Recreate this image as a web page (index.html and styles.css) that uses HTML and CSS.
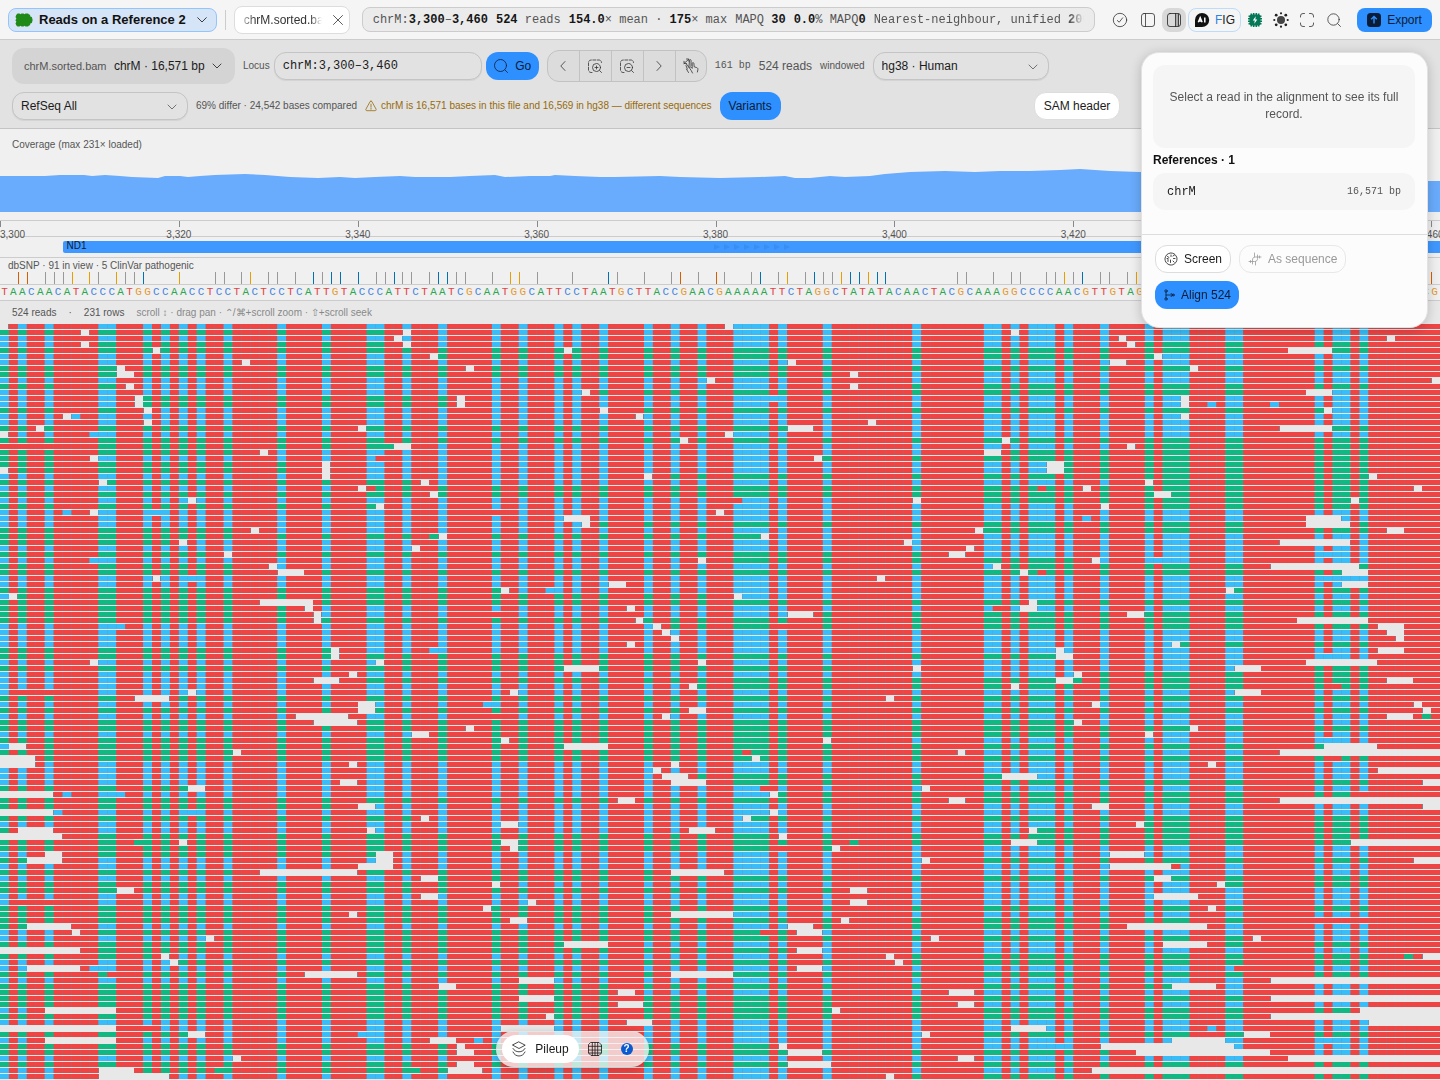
FILE: index.html
```html
<!DOCTYPE html>
<html lang="en">
<head>
<meta charset="utf-8">
<meta name="viewport" content="width=device-width, initial-scale=1">
<title>Reads on a Reference 2</title>
<link rel="stylesheet" href="styles.css">
</head>
<body>
<header class="topbar">
  <button class="title-btn">
    <svg class="logo" width="18" height="14" viewBox="0 0 18 14"><path fill="#1f8a17" d="M2.500 .5h2l1 .7 1-.7h2l1 .7 1-.7h2.500l1 .9 1 .4.3 1.700 1.500.6.7 2.200v1.400l-.7 2.200-1.500.6-.3 1.700-1 .4-1 .9h-2.500l-1-.7-1 .7h-2l-1-.7-1 .7h-2l-1.300-1.200-.7-2 .9-1.600-.9-1.200v-.6l.9-1.200-.9-1.600.7-2z"/></svg>
    <span class="title-text">Reads on a Reference 2</span>
    <svg class="title-chev" width="10" height="6" viewBox="0 0 10 6"><path class="ln" d="M.7.700 5 5l4.300-4.300"/></svg>
  </button>
  <span class="divider"></span>
  <div class="file-tab"><span class="tab-name">chrM.sorted.bam</span>
    <button class="bare" aria-label="Close tab"><svg width="12" height="12" viewBox="0 0 12 12"><path class="ln" d="M1.500 1.500l9 9M10.500 1.500l-9 9"/></svg></button></div>
  <div class="status"><span>chrM:<b>3,300</b>–<b>3,460</b></span><span><b>524</b> reads</span><span><b>154.0</b>× mean · <b>175</b>× max</span><span>MAPQ <b>30</b></span><span><b>0.0</b>% MAPQ<b>0</b></span><span>Nearest-neighbour, unified <b>200</b>/200</span></div>
  <nav class="tools">
    <button class="icon-btn wide" aria-label="Checks"><svg width="16" height="16" viewBox="0 0 16 16"><circle class="ln" cx="8" cy="8" r="6.700"/><path class="ln" d="M5.300 8.500l1.900 1.700 3.500-4.400"/></svg></button>
    <button class="icon-btn wide" aria-label="Left sidebar"><svg width="16" height="16" viewBox="0 0 16 16"><rect class="ln" x="1.500" y="1.500" width="13" height="13" rx="2.500"/><path class="ln" d="M5.500 1.500v13"/></svg></button>
    <button class="icon-btn on" aria-label="Right sidebar"><svg width="16" height="16" viewBox="0 0 16 16"><rect class="ln" x="1.500" y="1.500" width="13" height="13" rx="2.500"/><path fill="#aaa" d="M10 2h3v12h-3z"/><path class="ln" d="M9.500 1.500v13M12.500 2v12"/></svg></button>
    <button class="fig-btn"><svg width="16" height="16" viewBox="0 0 16 16"><path fill="#111" d="M8 1a7 6.800 0 1 1 0 14H1V8a7 7 0 0 1 7-7z"/><path d="M4.300 10.300L6.200 5.700l1.900 4.600M5 8.900h2.500M10.800 5.500v5" fill="none" stroke="#fff" stroke-width="1.500"/></svg><span><i>F</i>IG</span></button>
    <button class="icon-btn" aria-label="Processor"><svg width="16" height="16" viewBox="0 0 16 16"><g stroke="#047857" stroke-width="1.600"><path d="M4.300 1.500v13M6.700 1v14M9.300 1v14M11.700 1.500v13M1.500 4.300h13M1 6.700h14M1 9.300h14M1.500 11.700h13"/></g><rect x="2.500" y="2.500" width="11" height="11" rx="2" fill="#047857"/><path fill="#fff" d="M8.800 4.300L5.800 8.400h2l-.5 3.300 3-4.200H8.300z"/></svg></button>
    <button class="icon-btn" aria-label="Theme"><svg width="16" height="16" viewBox="0 0 16 16"><circle cx="8" cy="8" r="4" fill="#444"/><g fill="#222"><circle cx="8" cy="1.300" r="1.100"/><circle cx="8" cy="14.700" r="1.100"/><circle cx="1.300" cy="8" r="1.100"/><circle cx="14.700" cy="8" r="1.100"/><circle cx="3.200" cy="3.200" r="1.400"/><circle cx="12.800" cy="3.200" r="1.400"/><circle cx="3.200" cy="12.800" r="1.400"/><circle cx="12.800" cy="12.800" r="1.400"/></g></svg></button>
    <button class="icon-btn" aria-label="Full screen"><svg width="16" height="16" viewBox="0 0 16 16"><path class="ln" d="M1.500 5V4A2.500 2.500 0 0 1 4 1.500h1.500M10.500 1.500H12A2.500 2.500 0 0 1 14.500 4v1M14.500 11v1a2.500 2.500 0 0 1-2.500 2.500h-1.500M5.500 14.500H4A2.500 2.500 0 0 1 1.500 12v-1"/></svg></button>
    <button class="icon-btn wide" aria-label="Search"><svg width="16" height="16" viewBox="0 0 16 16"><circle class="ln" cx="7.500" cy="7.500" r="5.700"/><path class="ln" d="M11.700 11.700l2.800 2.800"/></svg></button>
  </nav>
  <button class="primary export"><svg width="14" height="14" viewBox="0 0 14 14"><rect width="14" height="14" rx="3.500" fill="#0b1c36"/><path d="M7 10.500v-7M4.200 6.200L7 3.400l2.800 2.800" fill="none" stroke="#2e90ff" stroke-width="1.400"/></svg>Export</button>
</header>

<section class="toolbar">
  <div class="tool-row">
    <button class="source"><span class="muted">chrM.sorted.bam</span><span>chrM · 16,571 bp</span><svg width="10" height="6" viewBox="0 0 10 6"><path class="ln" d="M1 1l4 4 4-4"/></svg></button>
    <form class="locus" onsubmit="return false">
      <label class="small" for="locus">Locus</label>
      <input id="locus" type="text" value="chrM:3,300–3,460">
      <button class="primary go"><svg width="16" height="16" viewBox="0 0 16 16"><circle class="ln" cx="7.500" cy="7.500" r="6"/><path class="ln" d="M12 12l2.500 2.500"/></svg>Go</button>
    </form>
    <div class="seg">
      <button aria-label="Previous"><svg width="16" height="16" viewBox="0 0 16 16"><path class="ln" d="M10 3.500L5.800 8l4.200 4.500"/></svg></button>
      <button aria-label="Zoom in"><svg width="16" height="16" viewBox="0 0 16 16"><path class="ln" stroke-dasharray="3 1.500" d="M5 14.500H4A2.500 2.500 0 0 1 1.500 12V4.500A2.500 2.500 0 0 1 4 2h8a2.500 2.500 0 0 1 2.500 2.500"/><circle class="ln" cx="9.500" cy="9.500" r="4"/><path class="ln" d="M12.500 12.500l2 2M9.500 8v3M8 9.500h3"/></svg></button>
      <button aria-label="Zoom out"><svg width="16" height="16" viewBox="0 0 16 16"><path class="ln" stroke-dasharray="3 1.500" d="M5 14.500H4A2.500 2.500 0 0 1 1.500 12V4.500A2.500 2.500 0 0 1 4 2h8a2.500 2.500 0 0 1 2.500 2.500"/><circle class="ln" cx="9.500" cy="9.500" r="4"/><path class="ln" d="M12.500 12.500l2 2M8 9.500h3"/></svg></button>
      <button aria-label="Next"><svg width="16" height="16" viewBox="0 0 16 16"><path class="ln" d="M6 3.500L10.200 8 6 12.500"/></svg></button>
      <button aria-label="Pan by hand"><svg width="16" height="16" viewBox="0 0 16 16"><path class="ln" d="M1 5.500L5.500 1.500M1 3.300v2.200h2.500M3.500 1h2.300v2.200M5.500 14.500l-2-3.300M4.300 11L3 7.500c-.3-1 .9-1.500 1.400-.6l1.400 2.600M6 8.500l.5-6c.1-1.200 1.600-1.100 1.600.1l-.1 5M9.500 15l-1.300-2.500-1.600-2.300c-.7-1 .5-1.900 1.300-1.100l1.300 1.300V5.500c0-1.200 1.600-1.200 1.700 0l.3 3.300 2.500.8c1 .4 1.300 1 1.200 2l-.5 2.400"/></svg></button>
    </div>
    <span class="mono small">161 bp</span>
    <span class="muted">524 reads</span>
    <span class="small">windowed</span>
    <span class="pick"><select aria-label="Genome"><option>hg38 · Human</option></select><svg width="10" height="6" viewBox="0 0 10 6"><path class="ln" d="M1 1l4 4 4-4"/></svg></span>
  </div>
  <div class="tool-row">
    <span class="pick"><select aria-label="Gene track"><option>RefSeq All</option></select><svg width="10" height="6" viewBox="0 0 10 6"><path class="ln" d="M1 1l4 4 4-4"/></svg></span>
    <span class="small">69% differ · 24,542 bases compared</span>
    <span class="small warn"><svg width="12" height="12" viewBox="0 0 12 12"><path class="ln" d="M6 1.200c.5 0 .8.200 1 .6l4 7.200c.4.800 0 1.700-1 1.700H2c-1 0-1.400-.9-1-1.700l4-7.200c.2-.4.500-.6 1-.6zM6 4.200v3M6 8.300v1"/></svg>chrM is 16,571 bases in this file and 16,569 in hg38 — different sequences</span>
    <button class="primary variants">Variants</button>
    <button class="plain sam">SAM header</button>
  </div>
</section>

<main class="viewer">
  <section class="coverage">
    <h2 class="small">Coverage (max 231× loaded)</h2>
    <svg id="cov" viewBox="0 0 1440 44" preserveAspectRatio="none"></svg>
  </section>
  <section class="ruler" id="ruler"></section>
  <section class="genes"><div class="gene"><span>ND1</span><svg width="78" height="6" viewBox="0 0 78 6"><path fill="#388ef2" d="M0 0l6 3-6 3zM10 0l6 3-6 3zM20 0l6 3-6 3zM30 0l6 3-6 3zM40 0l6 3-6 3zM50 0l6 3-6 3zM60 0l6 3-6 3zM70 0l6 3-6 3z"/></svg></div></section>
  <section class="snps" id="snps"><h2 class="small">dbSNP · 91 in view · 5 ClinVar pathogenic</h2></section>
  <section class="bases" id="bases"></section>
  <section class="summary small"><span>524 reads</span><span>·</span><span>231 rows</span><span class="hint">scroll ↕ · drag pan · ⌃/⌘+scroll zoom · ⇧+scroll seek</span></section>
  <canvas class="pileup" id="pileup" aria-label="Aligned reads"></canvas>

  <div class="dock-area">
    <nav class="dock">
      <button class="dock-on"><svg width="16" height="16" viewBox="0 0 16 16"><path class="ln" d="M8 1l6.200 3.200L8 7.500 1.800 4.200zM2 7.500c1 2 3.500 3.300 6 3.300s5-1.300 6-3.300M2 11c1 2.500 3.500 4 6 4s5-1.500 6-4"/></svg>Pileup</button>
      <button aria-label="Grid"><svg width="16" height="16" viewBox="0 0 16 16"><path class="ln" d="M4 1.500h8L14.500 4v8L12 14.500H4L1.500 12V4zM5.300 1.500v13M8 1.500v13M10.700 1.500v13M1.500 5.300h13M1.500 9h13M2 12h12"/></svg></button>
      <button aria-label="Help"><span class="help">?</span></button>
    </nav>
  </div>
</main>

<aside class="panel">
  <div class="panel-body">
    <p class="empty">Select a read in the alignment to see its full record.</p>
    <h2>References · 1</h2>
    <div class="ref"><span>chrM</span><span class="len">16,571 bp</span></div>
  </div>
  <footer class="panel-foot">
    <button class="plain"><svg width="14" height="14" viewBox="0 0 14 14"><circle class="ln" cx="7" cy="7" r="6" stroke-dasharray="3.200 .7"/><path class="ln" d="M3.500 4.500l1.500 1M7 3v1.500M9 4l1.500-1M9.500 6.500l1.500 0M4 7.500v2M6.500 8v2.500M9 9l1.200 1.200M3 6.500h1"/></svg>Screen</button>
    <button class="plain" disabled><svg width="14" height="14" viewBox="0 0 14 14"><path class="ln" d="M1 9.500h5.500c2 0 3-1 3-3V3M13 5H7.500c-2 0-3 1-3 3v4M6.500 1v4M7.500 9.500V13M2.500 8.500v2M11.500 4v2"/></svg>As sequence</button>
    <button class="primary"><svg width="12" height="12" viewBox="0 0 12 12"><path class="ln" d="M3 3v6M3 6h6M8 4.300L9.700 6 8 7.700"/><circle class="ln" cx="3" cy="2" r="1.200"/><circle class="ln" cx="3" cy="10" r="1.200"/><circle class="ln" cx="10.200" cy="6" r="1"/></svg>Align 524</button>
  </footer>
</aside>
<script src="app.js"></script>
</body>
</html>
```

FILE: styles.css
```css
* { box-sizing: border-box; }
body {
  margin: 0;
  min-height: 100vh;
  position: relative;
  background: #e8e8e8;
  color: #1b1b1b;
  font: 12px/16px "Liberation Sans", Arial, sans-serif;
}
button, input, select { font: inherit; color: inherit; margin: 0; }
button { border: 0; background: none; padding: 0; display: flex; align-items: center; justify-content: center; cursor: pointer; }
h2, p { margin: 0; font-weight: normal; }
svg { display: block; flex: none; }
.ln { fill: none; stroke: currentColor; stroke-width: .8; stroke-linecap: round; stroke-linejoin: round; }
.small { font-size: 10px; color: #555; white-space: nowrap; }
.muted { color: #555; white-space: nowrap; }
.mono, .status, #locus, .ref, .bases { font-family: "Liberation Mono", monospace; }

/* Top bar */
.topbar { display: flex; align-items: center; height: 40px; padding: 0 8px; background: #f5f5f5; border-bottom: 1px solid #ccc; }
.title-btn { height: 24px; padding: 0 9px 0 6px; gap: 6px; background: #d5e4f7; border: 1px solid #93c5fd; border-radius: 8px; font-size: 13px; font-weight: bold; white-space: nowrap; color: #111; }
.title-chev { margin-left: 5px; }
.divider { width: 1px; height: 20px; margin: 0 8px; background: #ccc; }
.file-tab { display: flex; align-items: center; justify-content: space-between; width: 116px; flex: none; height: 28px; padding: 0 5px 0 9px; background: #fff; border: 1px solid #ddd; border-radius: 8px; color: #333; }
.tab-name { width: 78px; overflow: hidden; white-space: nowrap; mask-image: linear-gradient(90deg, #0006, #000 12px, #000 66px, transparent); }
.status { display: flex; gap: 8px; flex: 1; min-width: 0; height: 25px; margin: 0 11px 0 12px; padding: 0 10px; align-items: center; overflow: hidden; white-space: pre; color: #555; background: #ebebeb; border: 1px solid #ccc; border-radius: 8px; }
.status b { color: #161616; }
.status span:last-child { flex: 1; min-width: 0; overflow: hidden; mask-image: linear-gradient(270deg, transparent, #000 20px); }
.tools { display: flex; align-items: center; color: #333; }
.icon-btn { width: 26px; height: 24px; }
.icon-btn.wide { width: 28px; }
.icon-btn.on { width: 24px; background: #d8d8d8; border-radius: 8px; color: #222; }
.fig-btn { width: 53px; height: 24px; margin: 0 1px 0 2px; gap: 5px; border: 1px solid #bcdcfb; border-radius: 8px; color: #1b1b1b; }
.fig-btn i { color: #2f80e0; font-style: normal; }
.primary { height: 28px; padding: 0 8px; gap: 6px; background: #2e90ff; color: #0b1c36; border-radius: 12px; white-space: nowrap; }
.export { width: 75px; height: 24px; margin-left: 9px; border-radius: 8px; }

/* Toolbar */
.toolbar { display: flex; flex-direction: column; gap: 8px; padding: 8px 320px 8px 12px; background: #e2e2e2; border-bottom: 1px solid #c4c4c4; }
.tool-row { display: flex; align-items: center; gap: 8px; }
.source { height: 36px; width: 223px; flex: none; justify-content: space-between; padding: 0 13px 0 12px; background: #d4d4d4; border-radius: 12px; white-space: nowrap; }
.source .muted { font-size: 11px; }
.locus { display: flex; align-items: center; gap: 4px; }
#locus, .pick select { height: 28px; border: 1px solid #c4c4c4; border-radius: 12px; background: #e2e2e2; outline: 0; box-shadow: 0 1px 1px #0001; }
#locus { width: 208px; padding: 0 8px; }
.go { width: 53px; }
.seg { display: flex; height: 32px; border: 1px solid #c2c2c2; border-radius: 12px; background: #dcdcdc; color: #333; }
.seg button { width: 32px; }
.seg button:first-child, .seg button:last-child { width: 31px; }
.seg button + button { border-left: 1px solid #c2c2c2; }
.pick { position: relative; width: 176px; flex: none; }
.pick select { appearance: none; width: 100%; padding: 0 8px; }
.pick svg { position: absolute; right: 11px; top: 12px; color: #555; pointer-events: none; }
.warn { display: flex; align-items: center; gap: 4px; color: #976b0a; }
.variants { width: 61px; }
.plain { height: 28px; padding: 0 8px; gap: 6px; background: #fff; border: 1px solid #ddd; border-radius: 12px; white-space: nowrap; }
.sam { width: 86px; margin-left: auto; }

/* Tracks */
.viewer { position: relative; background: #f0f0f0; overflow: hidden; }
.coverage { display: flex; flex-direction: column; justify-content: space-between; height: 91px; padding-bottom: 8px; }
.coverage h2 { padding: 8px 12px; }
.coverage svg { width: 100%; height: 44px; }
.ruler, .genes, .snps, .bases, .summary { border-top: 1px solid #ccc; }
.ruler { position: relative; height: 16px; }
.ruler i { position: absolute; top: 0; width: 1px; height: 6px; background: #888; }
.ruler span { position: absolute; z-index: 1; top: 6px; transform: translateX(-50%); }
.ruler span.first { transform: none; }
.genes { height: 21px; padding-top: 4px; }
.gene { position: relative; height: 12px; margin-left: 4.348%; padding-left: 4px; background: #3f98ff; border-radius: 2px 0 0 2px; color: #0b1c36; font-size: 10px; line-height: 10px; }
.gene svg { position: absolute; left: 47.300%; top: 3px; }
.snps { position: relative; height: 27px; }
.snps h2 { padding: 0 8px; }
.snps i { position: absolute; top: 14px; width: 1px; height: 12px; background: #999; }
.snps .p { background: #d55e00; }
.snps .y { background: #e69f00; }
.snps .b { background: #0072b2; }
.bases { display: flex; height: 16px; font-size: 11px; line-height: 15px; }
.bases span { flex: 1 1 0; min-width: 0; text-align: center; }
.A { color: #2ca650; }
.C { color: #4585e0; }
.G { color: #e59a35; }
.T { color: #e04545; }
.summary { display: flex; align-items: center; gap: 12px; height: 24px; padding: 0 12px; background: #e8e8e8; }
.hint { color: #888; }
.pileup { display: block; width: 100%; height: 756px; background: #e8e8e8; }

/* Floating dock */
.dock-area { position: absolute; left: 0; right: 296px; bottom: 13px; display: flex; justify-content: center; }
.dock { display: flex; align-items: center; height: 36px; padding: 0 5px; background: #f5f5f5c4; border: 1px solid #ddd9; border-radius: 18px; box-shadow: 0 2px 8px #0003; }
.dock button { width: 32px; height: 28px; }
.dock .dock-on { width: 77px; gap: 8px; background: #fff; border-radius: 14px; }
.help { width: 12px; height: 12px; border-radius: 50%; background: #0b5bd0; color: #fff; font-size: 10px; font-weight: bold; line-height: 12px; }

/* Inspector */
.panel { position: absolute; z-index: 2; top: 52px; right: 12px; width: 287px; background: #fcfcfc; border: 1px solid #e2e2e2; border-radius: 18px; box-shadow: 0 2px 12px #0003; }
.panel-body { padding: 12px 12px 24px 11px; }
.empty { display: flex; align-items: center; min-height: 83px; padding: 8px 12px 10px; background: #f5f5f5; border-radius: 12px; text-align: center; color: #555; line-height: 17px; }
.panel h2 { margin: 4px 0 5px; font-size: 12px; font-weight: bold; color: #111; }
.ref { display: flex; justify-content: space-between; align-items: center; height: 37px; padding: 0 14px; background: #f5f5f5; border-radius: 12px; }
.len { font-size: 10px; color: #555; }
.panel-foot { display: flex; flex-wrap: wrap; gap: 8px; padding: 10px 13px 18px; border-top: 1px solid #ddd; }
.plain:disabled { color: #999; border-color: #e8e8e8; background: none; }
```

FILE: app.js
```js
const COLS = 161;
const START = 3300;
const SEQ = 'TAACAACATACCCATGGCCAACCTCCTACTCCTCATTGTACCCATTCTAATCGCAATGGCATTCCTAATGCTTACCGAACGAAAAATTCTAGGCTATATACAACTACGCAAAGGCCCCAACGTTGTAGGCCCCTACGGGCTACTACAACCCTTCGCTGACG';

const bases = document.getElementById('bases');
for (const ch of SEQ) {
  const s = document.createElement('span');
  s.className = ch;
  s.textContent = ch;
  bases.append(s);
}

const ruler = document.getElementById('ruler');
for (let c = 0; c < COLS; c += 20) {
  const tick = document.createElement('i');
  const label = document.createElement('span');
  tick.style.left = label.style.left = c / COLS * 100 + '%';
  label.className = c ? 'small' : 'small first';
  label.textContent = (START + c).toLocaleString('en-US');
  ruler.append(tick, label);
}

// Variant positions by class: p pathogenic, y uncertain, b benign, n unclassified
const SNPS = {
  p: [2, 3, 76, 80, 160],
  y: [8, 10, 13, 20, 28, 57, 58, 88, 94, 97, 119, 127],
  b: [16, 35, 37, 38, 40, 44, 49, 50, 68, 85, 91, 95, 96, 98, 99, 121],
  n: [5, 6, 7, 11, 14, 15, 24, 25, 27, 30, 31, 33, 36, 42, 43, 45, 46, 48, 51, 52, 55, 60, 64, 69, 72, 75, 78, 81, 84, 87, 90, 92, 93, 107, 108, 111, 113, 114, 117, 118, 120, 123, 124, 126]
};
const snps = document.getElementById('snps');
for (const kind in SNPS) {
  for (const c of SNPS[kind]) {
    const i = document.createElement('i');
    i.className = kind;
    i.style.left = c / COLS * 100 + '%';
    snps.append(i);
  }
}

// Coverage profile: x, y of the top edge
const COV = [0,8, 20,8, 45,8, 60,7, 75,7, 84,7, 92,8, 105,7, 120,8, 132,9, 158,10, 165,8, 180,8, 188,9, 200,8, 215,7, 245,6, 265,7, 290,9, 318,10, 340,9, 355,10, 375,9, 400,8, 415,9, 450,9, 470,8, 495,7, 505,9, 530,8, 550,8, 555,7, 575,8, 600,9, 615,9, 660,8, 680,9, 720,10, 760,9, 785,8, 795,10, 810,10, 830,8, 845,9, 870,8, 885,6, 910,4, 945,3, 975,4, 1000,3, 1030,3, 1060,2, 1080,1, 1110,3, 1140,4, 1200,5, 1300,8, 1400,11, 1427,13, 1440,13];
let d = 'M0 44';
for (let i = 0; i < COV.length; i += 2) d += 'L' + COV[i] + ' ' + COV[i + 1];
document.getElementById('cov').innerHTML = '<path fill="#69abfc" d="' + d + 'V44z"/>';

// One line per row: strand of the first read (f/r), then gaps as start[+length] with the
// strand of the read that follows, and single-base exceptions as !column and colour.
const ROWS = `f 0f 81f
r 9r 45f 113f
f 44f 125f 155f
f 9r 45f 126r
r 17r 63r 144+5r
f 48r 129f
f 27f 88f 124+2f
r 13r 52r 133r
r 13+2r 95f
f 79f 160f
r 14f 95r
f 65r 146+3f
f 15r 51f !86f 132f
f 15r 51f 132f !135f !142f
r 16f 67r 148f
f 7f !8f 71f 132f
f 16f 97f
r 4r 40r 88+3f 143+6r
f 0f !10f 81f
r 76r 112r
r !0m !2m !5m !43r 44+2f 126r
r 29f 110+2r
r 10f !42m 91r
r 36f 117+2r
f 0r 36f 117+2r
f 36f 72r 153r
r 11r 47f 128r
f 40r !41m !116m 121r 158r
r 48r 129+2r
f 21f !82m 102r 151r
r 42f 123r
f !7f 10f !17f !55m 80f
f 63+3f !121f 146+4f
f 65r 146+5r
r 28f 109r 155+2r
r !48r 49r 85f
r 20f 101f 143+8f
f 46f 108f
r 25r 106+2f !148f
f !10f 78r 122f !129f
r 30f 111r 142+10r
r 31+3r 114r !116m 150+3r
f 17f !21f 98f !148f !151f
f 68+2f 150+3f
r 56f !61f 137r
f 1r 82f
r 29+6r 115r
r 34f 70f !111m 114+2f
r 35f !55m 88+3r 126+2r
r 35r 71r 145+8r
f !13f 73r !87m 154+3r
f 74f 155+2f
f 75f 156f
f 70f 131r
r 37f !48f 118f 154+3f
r 37r 118+2f !148f
f 10f 42r 78f 146+8f
r 63+4r 102f 138+3r
f 39f 120r
f 35+3r 118+2r !120r 155+3r
f 77r 113r !149m
f !2m !5m 21f 57f 138+3f
r 15+4r 99r
f 40+2f !54f 122f 158f
r 40+2r 77+2r 159r
f 33+6f !55m 74f 155+3r !159r
r 35+5r 120f
r 52r 133r
f 46+2r 128f
r 56r 92f !148f
f 1+2r 63+5r 148+6r
r 26r !83m 107f 143+18f
r 0+4r 84r !149m
f 0+4f 39f 75f 135f
f 73f 154+7f
f 74+3r !78r 112+4f
f 38+2f 75+4r 159+2f
r 21+2f !85m 103f
f 0+6f !7f !13f 86r !152m
r 69+2r 106+2r 143+18r
r 40+2f 122+2f 159+2f
f 0+6f !6f !21f 86f
r 47f 83r
f 56+2f 127r
r 2+4f 41f 77+3f 115r
r 0+7r 87r
r !15r 20r 56+2r !95r 113+3r 151+10f
r 57r !87m 93f
f 5+2r 42+2f 124+4f
r 3+4f 42+2f 103r 158+3r
f 40+4f 124+7f !131m
r 29+11r 75+6f
f 47+2r 129+2r
r 55f 136r
r 13+2r 95+2f
f 47+2f 129+5f
f !2m !5m 59f 95+2f
r 54r 135r
r 39r 75+7f
r 57+2r 94r !147m !149m !150m !152m
r 3+5f 88+3r 126+9f
f 8r !85m 89+3f
f 23r 104r 140f
r 63+5f 130+5r
r 0+9r 89+3f
r 18f 99r !157r 159+2f
f 19r 100r
f 3+6f !10f 89+3f !138m
r !12m 34+6r 75+7r
f 58+4f 142+19f
r 49+2r 131+5f
r 69+2f 106+3f
r 58+4r 142+19r
r 69+3r 107+2f
f 5+8r 93r 152+9f
r 61r 142+19r
f 70+3f 153+8f
f 0+13f !16m 56+6f 113+4f !135f
r 21+2f !40f 103r 139+3r
f 5+8f 48+3f !53f 131+6f !148f
r 51r 87f !118f 123+15f
r 51+2r 88+4r 127+15f
f 26f 107+2f 144+17f
r 51+2r 88+5r
f 11+4r !24r !46r 50+4f 122+39f
f 11+8f 99r`.split('\n');

const MATCH = new Set([0, 2, 5, 11, 12, 16, 18, 20, 22, 25, 31, 36, 41, 42, 45, 49, 55, 58, 62, 64, 67, 72, 75, 78, 82, 83, 84, 85, 87, 92, 102, 110, 111, 113, 115, 116, 117, 119, 123, 128, 130, 131, 132, 137, 138, 147, 149, 150, 152]);
const COLOR = { f: '#38bdf8', r: '#10b981', m: '#ef4444' };

function parseRow(line) {
  const parts = line.split(' ');
  const strand = new Array(COLS).fill(parts[0]);
  const over = {};
  for (const p of parts.slice(1)) {
    if (p[0] === '!') { over[parseInt(p.slice(1))] = p.slice(-1); continue; }
    const m = p.match(/^(\d+)(?:\+(\d+))?([fr])$/);
    const at = +m[1], len = +(m[2] || 1);
    for (let c = at; c < COLS; c++) strand[c] = c < at + len ? null : m[3];
  }
  return strand.map((s, c) => s && (over[c] || (MATCH.has(c) ? s : 'm')));
}

const cells = ROWS.map(parseRow);
const canvas = document.getElementById('pileup');
function draw() {
  const dpr = window.devicePixelRatio || 1;
  const w = canvas.clientWidth, h = canvas.clientHeight;
  canvas.width = w * dpr;
  canvas.height = h * dpr;
  const g = canvas.getContext('2d');
  g.scale(dpr, dpr);
  const cw = w / COLS;
  cells.forEach((row, r) => {
    row.forEach((kind, c) => {
      if (!kind) return;
      g.fillStyle = '#7b8490';
      g.fillRect(Math.floor(c * cw), r * 6, Math.ceil((c + 1) * cw) - Math.floor(c * cw), 5);
    });
    row.forEach((kind, c) => {
      if (!kind) return;
      g.fillStyle = COLOR[kind];
      g.fillRect(c * cw, r * 6, cw, 5);
    });
  });
}
draw();
window.addEventListener('resize', draw);
```
